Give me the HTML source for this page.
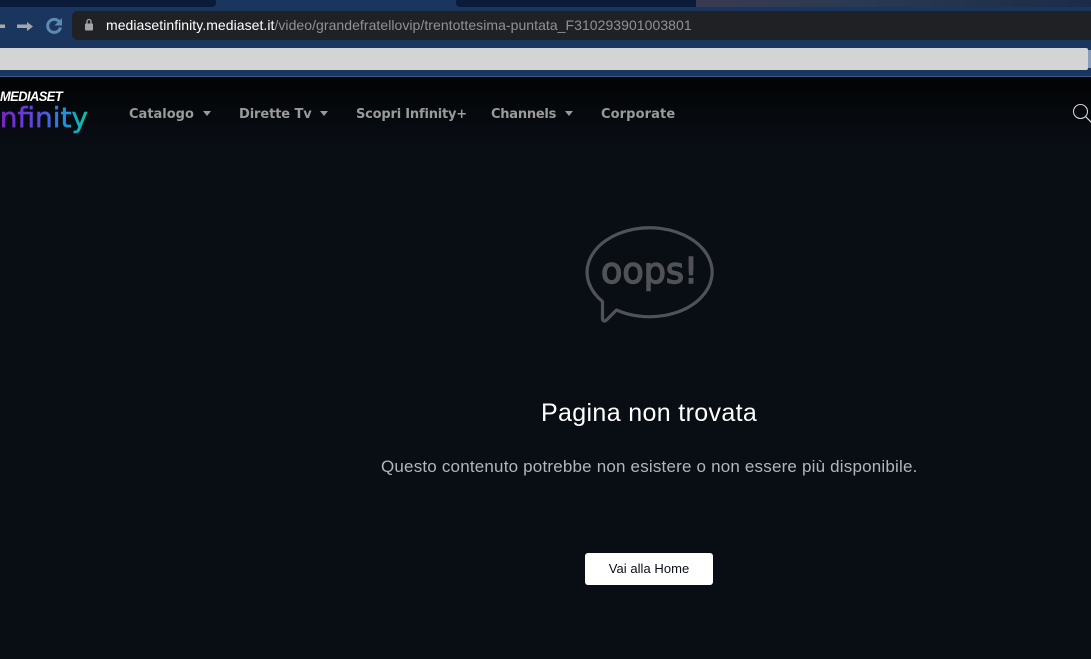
<!DOCTYPE html>
<html lang="it"><head><meta charset="utf-8"><title>Mediaset Infinity</title>
<style>
html,body{margin:0;padding:0}
body{width:1091px;height:659px;overflow:hidden;position:relative;background:#090e15;font-family:"Liberation Sans",sans-serif}
.a{position:absolute;white-space:nowrap}
.nav{font:bold 13px "DejaVu Sans",sans-serif;color:#9a9a9a;top:107px;line-height:16px}
.car{position:absolute;top:111px;width:0;height:0;border-left:4.5px solid transparent;border-right:4.5px solid transparent;border-top:5px solid #9a9a9a}
</style></head><body>
<div class="a" style="left:0;top:0;width:1091px;height:77px;background:#1a365f"></div>
<div class="a" style="left:0;top:0;width:216px;height:7px;background:#0a1c3a;border-radius:0 0 4px 0"></div>
<div class="a" style="left:456px;top:0;width:240px;height:7px;background:#0a1c3a;border-radius:0 0 0 4px"></div>
<div class="a" style="left:696px;top:0;width:395px;height:7px;background:linear-gradient(90deg,#3a3a52,#2a3a52 40%,#1a2c48)"></div>
<svg class="a" style="left:0;top:10px" width="72" height="32" viewBox="0 0 72 32">
<path d="M0 14.500h5v3.500H0z" fill="#a9a9a9"/>
<path d="M17 14.500h10v-2.500l6 4.500-6 4.500v-3H17z" fill="#a6a6a6"/>
<path d="M59 11.500a6.500 6.500 0 1 0 1.500 6" fill="none" stroke="#5c8ab2" stroke-width="3"/>
<path d="M62 8v7.500h-7.500z" fill="#5c8ab2"/>
</svg>
<div class="a" style="left:72px;top:11px;width:1019px;height:29px;background:#202124;border-radius:5px 0 0 5px"></div>
<svg class="a" style="left:84px;top:18px" width="11" height="14" viewBox="0 0 11 14">
<rect x="1" y="5.500" width="8" height="7" rx="1" fill="#a2a4a7"/>
<path d="M3 6V3.500a2 2 0 0 1 4 0V6" fill="none" stroke="#a2a4a7" stroke-width="1.300"/>
</svg>
<div class="a" style="left:106px;top:17px;font-size:14px;line-height:17px;color:#fff;letter-spacing:.05px">mediasetinfinity.mediaset.it<span style="color:#8f9194">/video/grandefratellovip/trentottesima-puntata_F310293901003801</span></div>
<div class="a" style="left:0;top:48px;width:1088px;height:22px;background:#d4d4d4;border-radius:0 2px 2px 0"></div>
<div class="a" style="left:1088px;top:50px;width:3px;height:18px;background:#8a9cb8"></div>
<div class="a" style="left:0;top:76px;width:1091px;height:1px;background:#3a5a88"></div>
<div class="a" style="left:0;top:77px;width:1091px;height:70px;background:linear-gradient(#020304,#090e15)"></div>

<div class="a" style="left:0;top:87px;font:italic bold 14px/18px 'Liberation Sans',sans-serif;color:#fff;letter-spacing:-.6px;transform:scaleX(.92);transform-origin:0 0">MEDIASET</div>
<svg class="a" style="left:0;top:104px" width="90" height="32" viewBox="0 0 90 32">
<defs><linearGradient id="g" x1="0" x2="88" y1="0" y2="0" gradientUnits="userSpaceOnUse">
<stop offset="0" stop-color="#7a22c8"/><stop offset=".45" stop-color="#5a4ce0"/><stop offset=".75" stop-color="#1a96e0"/><stop offset="1" stop-color="#0cc49a"/></linearGradient></defs>
<text x="-8" y="23" font-family="DejaVu Sans" font-size="28" fill="url(#g)" stroke="url(#g)" stroke-width=".5" textLength="96" lengthAdjust="spacingAndGlyphs">infinity</text>
</svg>

<div class="a nav" style="left:129px">Catalogo</div><div class="car" style="left:203px"></div>
<div class="a nav" style="left:239px;letter-spacing:-.1px">Dirette Tv</div><div class="car" style="left:320px"></div>
<div class="a nav" style="left:356px;letter-spacing:-.2px">Scopri Infinity+</div>
<div class="a nav" style="left:491px;letter-spacing:-.25px">Channels</div><div class="car" style="left:565px"></div>
<div class="a nav" style="left:601px;letter-spacing:.1px">Corporate</div>
<svg class="a" style="left:1070px;top:101px" width="21" height="24" viewBox="0 0 21 24">
<circle cx="10.500" cy="10.500" r="7" fill="none" stroke="#d0d0d0" stroke-width="1.100"/>
<path d="M15.500 15.500l6 6" stroke="#d8d8d8" stroke-width="1.200"/>
</svg>

<svg class="a" style="left:570px;top:215px" width="160" height="120" viewBox="0 0 160 120">
<path transform="translate(1.500 1.500)" d="M45 93.500A62.500 44.500 0 1 0 31 85L31 102.500Q32 106 35 103.500Z" fill="none" stroke="#505255" stroke-width="3.200" stroke-linejoin="round"/>
<text x="31" y="68" font-family="DejaVu Sans" font-size="36" fill="#505255" stroke="#505255" stroke-width="1.400" textLength="97" lengthAdjust="spacingAndGlyphs">oops!</text>
</svg>

<div class="a" style="left:541px;top:398px;font-size:25px;line-height:30px;color:#fff;letter-spacing:.35px">Pagina non trovata</div>
<div class="a" style="left:381px;top:457px;font-size:17px;line-height:20px;color:#b3b5b8;letter-spacing:.19px">Questo contenuto potrebbe non esistere o non essere più disponibile.</div>
<div class="a" style="left:585px;top:553px;width:128px;height:32px;background:#fff;border-radius:3px;text-align:center;font-size:13px;line-height:32px;color:#0a0e18;letter-spacing:.05px">Vai alla Home</div>
</body></html>
